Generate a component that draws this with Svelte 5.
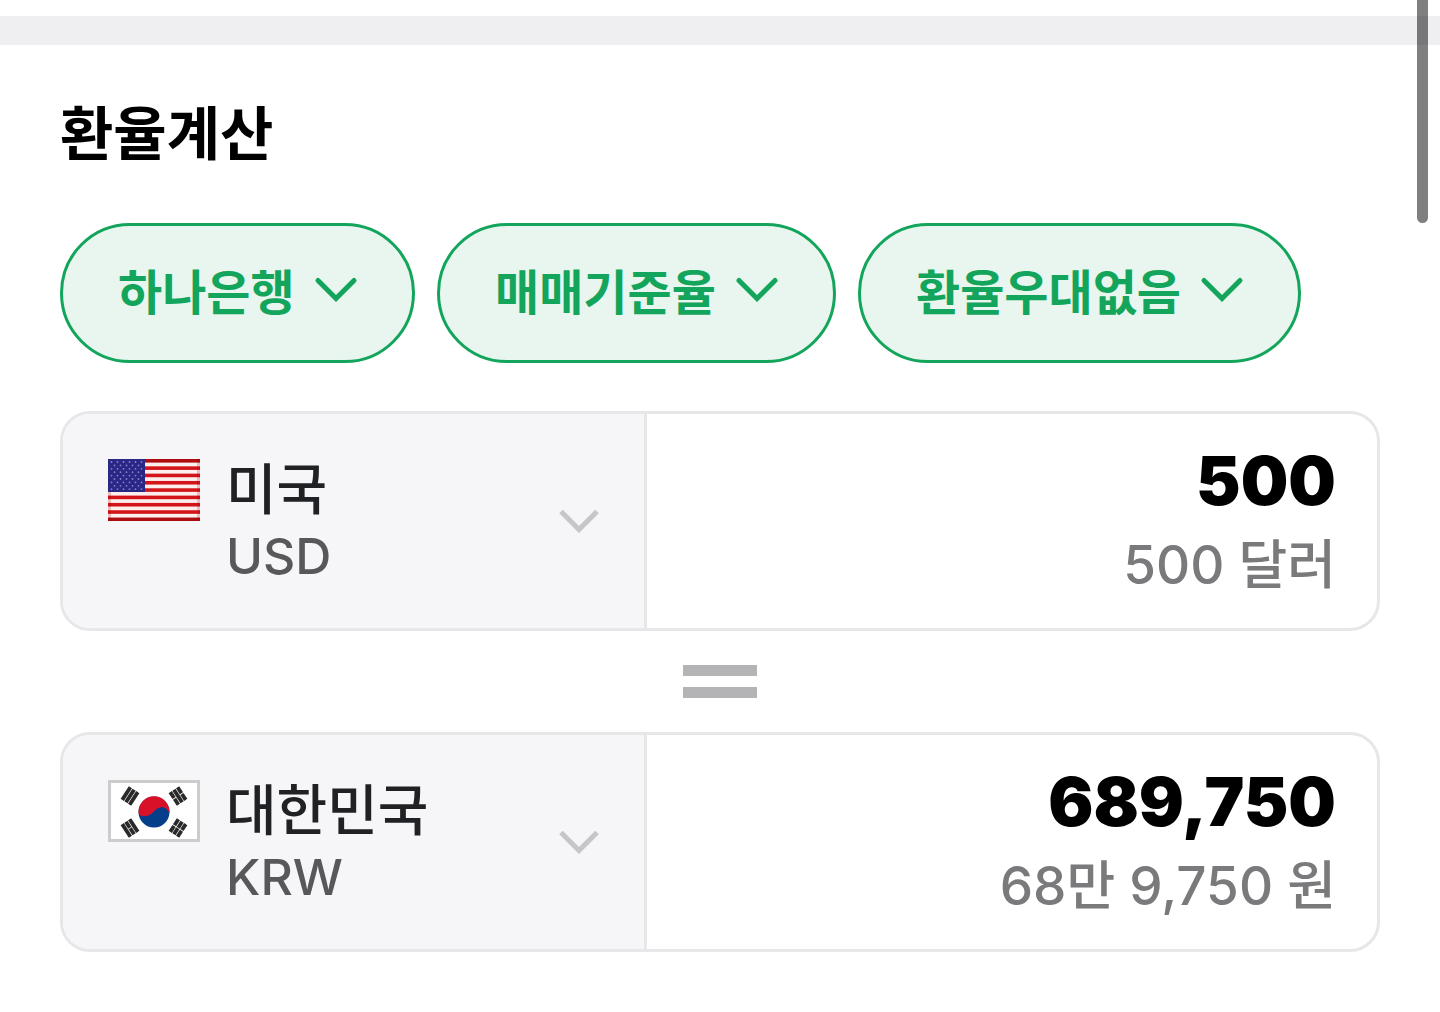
<script lang="ts">
  let filters = $state([
    { label: "은행", options: ["하나은행"], value: "하나은행" },
    { label: "환율 기준", options: ["매매기준율"], value: "매매기준율" },
    { label: "환율 우대", options: ["환율우대없음"], value: "환율우대없음" },
  ]);

  let rows = $state([
    { flag: "us", country: "미국", code: "USD", amount: "500", reading: "500 달러" },
    { flag: "kr", country: "대한민국", code: "KRW", amount: "689,750", reading: "68만 9,750 원" },
  ]);

  const stars = Array.from({ length: 9 }, (_, row) =>
    Array.from({ length: row % 2 ? 5 : 6 }, (_, col) => ({
      x: 3.5 + col * 6 + (row % 2 ? 3 : 0),
      y: 3 + row * 3.4,
    })),
  ).flat();

  // bar tops of each trigram, measured from its centre
  const bars = [-6.3, -1.9, 2.5];
  const trigrams = [
    { x: 22, y: 16, angle: -57, split: [false, false, false] },
    { x: 70, y: 16, angle: 57, split: [true, false, true] },
    { x: 22, y: 48, angle: 57, split: [false, true, false] },
    { x: 70, y: 48, angle: -57, split: [true, true, true] },
  ];
</script>

{#snippet chevron()}
  <svg class="chevron" viewBox="0 0 40 24" aria-hidden="true">
    <path d="M2 2.5 20 20.5 38 2.5" />
  </svg>
{/snippet}

{#snippet usFlag()}
  <svg class="flag" viewBox="0 0 92 62" aria-hidden="true">
    <rect width="92" height="62" fill="#fdeeee" />
    {#each Array(9) as _, i}
      <rect y={i * 7.32} width="92" height="3.6" fill={i === 0 || i === 8 ? "#ad0b10" : "#d3151a"} />
    {/each}
    <rect width="37" height="33" fill="#2b2787" />
    {#each stars as star}
      <circle cx={star.x} cy={star.y} r="0.9" fill="#8583c6" />
    {/each}
    <path d="M1.5 33V62M90.5 0V62" stroke="#900" stroke-opacity="0.2" stroke-width="3" />
  </svg>
{/snippet}

{#snippet krFlag()}
  <svg class="flag" viewBox="0 0 92 62" aria-hidden="true">
    <rect x="1.5" y="1.5" width="89" height="59" fill="#fff" stroke="#ccc" stroke-width="3" />
    <circle cx="46" cy="32" r="15.5" fill="#053f8c" />
    <path
      d="M30.6 33.5A15.5 15.5 0 1 1 61.4 33.5C59 26 51 25 46 31.5C41 37 34 38 30.6 33.5"
      fill="#d91128"
    />
    {#each trigrams as mark}
      <g transform="translate({mark.x} {mark.y}) rotate({mark.angle})" fill="#2a2a2a">
        {#each bars as top, i}
          {#if mark.split[i]}
            <rect x="-7.5" y={top} width="7.1" height="3.8" />
            <rect x="0.4" y={top} width="7.1" height="3.8" />
          {:else}
            <rect x="-7.5" y={top} width="15" height="3.8" />
          {/if}
        {/each}
      </g>
    {/each}
  </svg>
{/snippet}

<div class="scrollbar"></div>
<div class="separator"></div>

<main>
  <h2>환율계산</h2>

  <div class="filters">
    {#each filters as filter}
      <div class="pill">
        <select aria-label={filter.label} bind:value={filter.value}>
          {#each filter.options as option}
            <option>{option}</option>
          {/each}
        </select>
        {@render chevron()}
      </div>
    {/each}
  </div>

  <div class="calculator">
    {#each rows as row, i}
      {#if i > 0}
        <div class="equals" role="img" aria-label="같음"></div>
      {/if}
      <div class="card">
        <div class="currency">
          {#if row.flag === "us"}
            {@render usFlag()}
          {:else}
            {@render krFlag()}
          {/if}
          <div class="names">
            <select id="country-{row.code}" bind:value={row.country}>
              <option>{row.country}</option>
            </select>
            <label for="country-{row.code}">{row.code}</label>
          </div>
          {@render chevron()}
        </div>
        <div class="amount">
          <input
            id="amount-{row.code}"
            type="text"
            inputmode="decimal"
            aria-label="{row.country} 금액"
            bind:value={row.amount}
          />
          <label for="amount-{row.code}">{row.reading}</label>
        </div>
      </div>
    {/each}
  </div>
</main>

<style>
  :global(body) {
    background: #fff;
    font-family: Inter, "Noto Sans CJK KR", sans-serif;
    color: #000;
  }

  .scrollbar {
    position: absolute;
    top: 0;
    right: 12px;
    width: 11px;
    height: 223px;
    border-radius: 0 0 6px 6px;
    background: rgba(0, 0, 0, 0.5);
  }

  .separator {
    height: 29px;
    margin-top: 16px;
    background: #efeff2;
  }

  main {
    padding: 48px 60px 60px;
  }

  h2 {
    margin: 0;
    font-size: 58px;
    font-weight: 700;
    line-height: 82px;
  }

  select,
  input {
    appearance: none;
    box-sizing: border-box;
    margin: 0;
    padding: 0;
    border: 0;
    background: none;
    color: inherit;
    font: inherit;
    outline: 0;
  }

  .chevron {
    flex: none;
    overflow: visible;
    width: 40px;
    height: 24px;
    fill: none;
    stroke: currentColor;
    stroke-width: 5px;
    pointer-events: none;
  }

  .filters {
    display: flex;
    gap: 22px;
    margin-top: 48px;
  }

  .pill {
    display: flex;
    align-items: center;
    gap: 21px;
    padding: 32px 56px 32px 55px;
    border: 3px solid #14a55c;
    border-radius: 70px;
    background: #e9f6ef;
    color: #14a55c;
    font-size: 48px;
    font-weight: 700;
    line-height: 70px;
  }

  .pill select {
    height: 70px;
  }

  .pill .chevron {
    margin-bottom: 6px;
    stroke-linecap: round;
  }

  .calculator {
    margin-top: 48px;
  }

  .card {
    display: grid;
    grid-template-columns: 4fr 5fr;
    overflow: hidden;
    border: 3px solid #e7e7ea;
    border-radius: 30px;
  }

  .currency {
    display: flex;
    align-items: center;
    padding: 40px 45px;
    border-right: 3px solid #e7e7ea;
    background: #f6f6f9;
    color: #c6c6c8;
  }

  .flag {
    flex: none;
    align-self: flex-start;
    width: 92px;
    height: 62px;
    margin-top: 5px;
  }

  .names {
    flex: 1;
    display: flex;
    flex-direction: column;
    margin-left: 26px;
  }

  .names select {
    height: 70px;
    color: #202124;
    font-size: 55px;
    font-weight: 500;
    line-height: 70px;
  }

  .names label {
    color: #58585a;
    font-size: 50px;
    font-weight: 500;
    line-height: 64px;
  }

  .amount {
    display: flex;
    flex-direction: column;
    padding: 24px 41px 20px;
    text-align: right;
  }

  .amount input {
    width: 100%;
    height: 84px;
    font-size: 67px;
    font-weight: 900;
    text-align: right;
  }

  .amount label {
    color: #7a7a7c;
    font-size: 53px;
    font-weight: 500;
    line-height: 86px;
  }

  .equals {
    box-sizing: border-box;
    width: 74px;
    height: 33px;
    margin: 34px auto;
    border: solid #b4b4b7;
    border-width: 11px 0;
  }
</style>
